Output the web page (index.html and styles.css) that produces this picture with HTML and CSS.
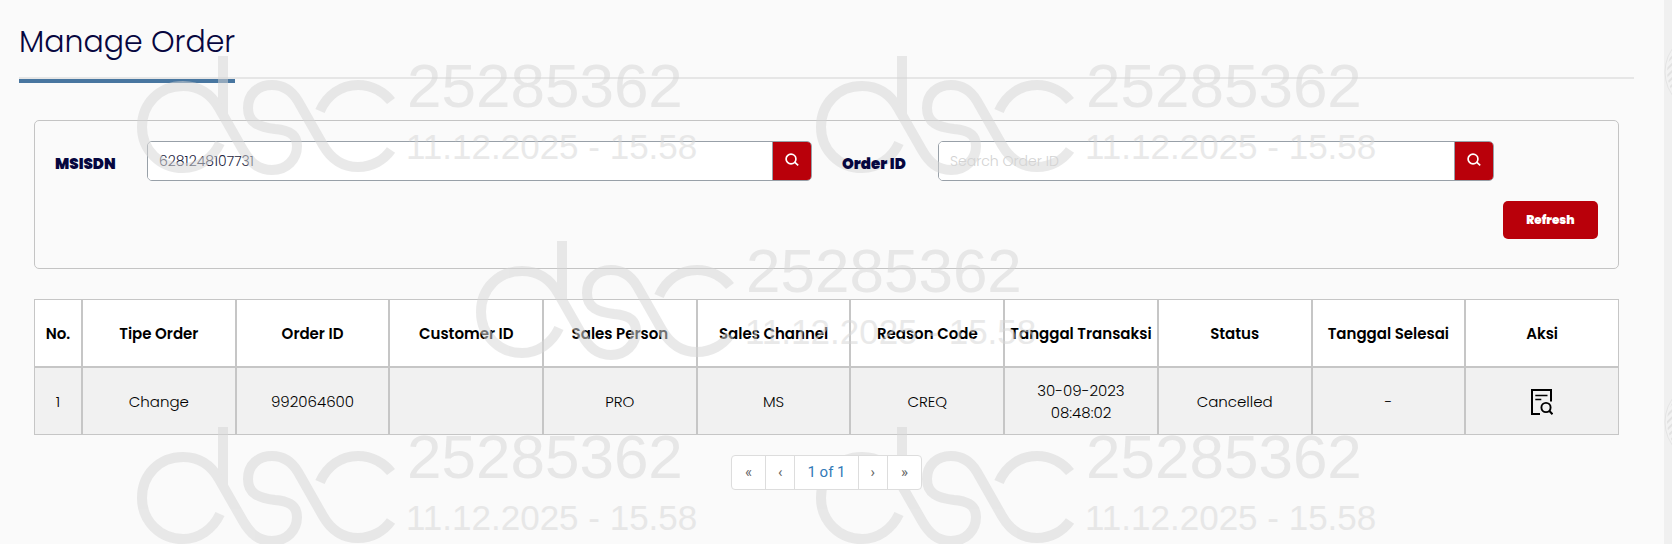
FILE: index.html
```html
<!DOCTYPE html>
<html lang="id">
<head>
<meta charset="utf-8">
<title>Manage Order</title>
<meta name="viewport" content="width=device-width, initial-scale=1">
<link rel="stylesheet" href="styles.css">
</head>
<body>
<main class="page">
  <header class="page-header">
    <h1 class="page-title">Manage Order</h1>
  </header>

  <form class="filters">
    <div class="filters-row">
      <label class="filter-label" for="msisdn">MSISDN</label>
      <div class="search">
        <input class="search-input" id="msisdn" type="text" value="6281248107731">
        <button class="search-button" type="button" aria-label="Cari MSISDN">
          <svg class="search-icon" viewBox="0 0 14 14"><circle cx="6" cy="6" r="4.9"/><path d="M9.4 8.9 13.2 12.4"/></svg>
        </button>
      </div>
      <label class="filter-label filter-label-second" for="order-id">Order ID</label>
      <div class="search">
        <input class="search-input" id="order-id" type="text" placeholder="Search Order ID">
        <button class="search-button" type="button" aria-label="Cari Order ID">
          <svg class="search-icon" viewBox="0 0 14 14"><circle cx="6" cy="6" r="4.9"/><path d="M9.4 8.9 13.2 12.4"/></svg>
        </button>
      </div>
    </div>
    <div class="filters-actions">
      <button class="refresh" type="button">Refresh</button>
    </div>
  </form>

  <table class="orders">
    <thead>
      <tr>
        <th class="col-no">No.</th>
        <th>Tipe Order</th>
        <th>Order ID</th>
        <th>Customer ID</th>
        <th>Sales Person</th>
        <th>Sales Channel</th>
        <th>Reason Code</th>
        <th>Tanggal Transaksi</th>
        <th>Status</th>
        <th>Tanggal Selesai</th>
        <th>Aksi</th>
      </tr>
    </thead>
    <tbody>
      <tr>
        <td>1</td>
        <td>Change</td>
        <td>992064600</td>
        <td></td>
        <td>PRO</td>
        <td>MS</td>
        <td>CREQ</td>
        <td>30-09-2023<br>08:48:02</td>
        <td>Cancelled</td>
        <td>-</td>
        <td>
          <button class="detail-button" type="button" aria-label="Detail">
            <svg class="detail-icon" viewBox="0 0 22 26">
              <path d="M9 25H1V1H20V12.5" stroke-width="2"/>
              <path d="M4.300 6.500H16.500M4.300 10.500H10.300" stroke-width="1.600"/>
              <circle cx="15" cy="18.500" r="4.600" stroke-width="1.900"/>
              <path d="M18.200 21.800 21.500 25.300" stroke-width="2"/>
            </svg>
          </button>
        </td>
      </tr>
    </tbody>
  </table>

  <nav class="pager" aria-label="Halaman">
    <button class="pager-item pager-end" type="button">«</button>
    <button class="pager-item" type="button">‹</button>
    <a class="pager-item pager-current" href="#">1 of 1</a>
    <button class="pager-item" type="button">›</button>
    <button class="pager-item pager-end" type="button">»</button>
  </nav>
</main>

<aside class="edge">
  <svg class="edge-art" viewBox="0 0 8 540" aria-hidden="true">
    <defs>
      <pattern id="hatch" width="5" height="5" patternUnits="userSpaceOnUse" patternTransform="rotate(45)">
        <path class="hatch-line" d="M1 0V5"/>
      </pattern>
    </defs>
    <circle class="edge-ring" cx="41" cy="72" r="40"/>
    <circle cx="41" cy="72" r="38" fill="url(#hatch)"/>
    <circle class="edge-ring" cx="41" cy="422" r="40"/>
    <circle cx="41" cy="422" r="38" fill="url(#hatch)"/>
  </svg>
</aside>

<svg class="watermark" aria-hidden="true">
  <defs>
    <g id="stamp">
      <g class="stamp-logo">
        <path d="M86 0V60"/>
        <path d="M83 87C76 102 62 112 46 112C23 112 5 94 5 71C5 48 22 30 46 30C62 30 74 38 82 52L106 94C113 106 121 114 135 114C150 114 160 103 160 90C160 78 151 74 138 73C122 71 111 67 111 52C111 38 121 29 135 29C147 29 155 35 161 45L186 89C194 103 205 111 221 111C235 111 247 104 254 94"/>
        <path d="M183 55C190 39 204 29 221 29C235 29 247 36 254 45"/>
      </g>
      <text class="stamp-id" x="270" y="51">25285362</text>
      <text class="stamp-date" x="269" y="103">11.12.2025 - 15.58</text>
    </g>
  </defs>
  <use href="#stamp" x="137" y="56"/>
  <use href="#stamp" x="816" y="56"/>
  <use href="#stamp" x="476" y="241"/>
  <use href="#stamp" x="137" y="427"/>
  <use href="#stamp" x="816" y="427"/>
</svg>
</body>
</html>
```
FILE: styles.css
```css
* {
  box-sizing: border-box;
}

body {
  position: relative;
  display: flex;
  min-height: 100vh;
  margin: 0;
  background: #fafafa;
  color: #000;
  font-family: Poppins, Inter, sans-serif;
  font-size: 15px;
  overflow-x: hidden;
}

.page {
  flex: 1;
  min-width: 0;
  padding: 19px 30px 0 19px;
}

.page-header {
  display: flex;
  border-bottom: 2px solid #e6e6e6;
}

.page-title {
  margin: 0 0 -6px;
  padding-bottom: 14px;
  border-bottom: 4px solid #4876a0;
  color: #06063f;
  font-size: 30px;
  font-weight: 300;
  line-height: 46px;
}

.filters {
  margin: 41px 15px 0;
  padding: 20px 20px 29px;
  border: 1px solid #c4c4c4;
  border-radius: 5px;
}

.filters-row {
  display: grid;
  grid-template-columns: 92px 665fr 126px 556fr;
  align-items: center;
  padding-right: 104px;
}

.filter-label {
  position: relative;
  z-index: 2;
  padding-top: 4px;
  color: #06063f;
  font-weight: 900;
}

.filter-label-second {
  padding-left: 30px;
}

.search {
  display: flex;
  height: 40px;
  border: 1px solid #98a0a8;
  border-radius: 5px;
  overflow: hidden;
}

.search-input {
  flex: 1;
  min-width: 0;
  padding: 0 11px;
  border: 0;
  background: #fff;
  color: #1b2440;
  font: inherit;
  font-size: 14px;
  font-weight: 300;
}

.search-input::placeholder {
  color: #d2d2d2;
  opacity: 1;
}

.search-button {
  display: flex;
  align-items: center;
  justify-content: center;
  width: 39px;
  padding: 0 0 2px;
  border: 0;
  border-left: 1px solid #98a0a8;
  background: #b9000a;
}

.search-icon {
  width: 14px;
  height: 14px;
  fill: none;
  stroke: #fff;
  stroke-width: 1.7;
}

.filters-actions {
  display: flex;
  justify-content: flex-end;
  padding-top: 20px;
}

.refresh {
  width: 95px;
  height: 38px;
  border: 0;
  border-radius: 5px;
  background: #b9000a;
  color: #fff;
  font: inherit;
  font-size: 12px;
  font-weight: 900;
}

.orders {
  width: calc(100% - 30px);
  margin: 30px 15px 0;
  border: 0;
  border-collapse: separate;
  border-spacing: 0;
  table-layout: fixed;
}

.orders th,
.orders td {
  height: 68px;
  padding: 2px 0 0;
  border: 1px solid #c6c6c6;
  text-align: center;
  vertical-align: middle;
  line-height: 22px;
}

.orders th {
  background: #fff;
  font-weight: 600;
}

.orders td {
  background: #f1f1f1;
  font-weight: 300;
}

.orders .col-no {
  width: 48px;
}

.detail-button {
  display: block;
  margin: 0 auto;
  padding: 0;
  border: 0;
  background: none;
}

.detail-icon {
  display: block;
  width: 22px;
  height: 26px;
  fill: none;
  stroke: #000;
}

.pager {
  position: relative;
  z-index: 2;
  display: flex;
  width: max-content;
  margin: 20px auto 0;
  border: 1px solid #ddd;
  border-radius: 4px;
  background: #fff;
}

.pager-item {
  height: 33px;
  padding: 0 12px;
  border: 0;
  background: none;
  color: #666;
  font-family: Roboto, sans-serif;
  font-size: 15px;
  line-height: 33px;
  text-decoration: none;
}

.pager-item + .pager-item {
  border-left: 1px solid #ddd;
}

.pager-end {
  padding: 0 13px;
}

.pager-current {
  color: #337ab7;
}

.edge {
  width: 8px;
  background: #f0f0f0;
}

.edge-art {
  display: block;
  width: 8px;
  height: 540px;
}

.edge-ring {
  fill: #f2f2f2;
  stroke: #e4e4e4;
}

.hatch-line {
  stroke: #e2e2e2;
  stroke-width: 2;
}

.watermark {
  position: absolute;
  inset: 0;
  z-index: 1;
  width: 100%;
  height: 100%;
  pointer-events: none;
}

#stamp {
  opacity: 0.52;
}

.stamp-logo {
  fill: none;
  stroke: #d6d6d6;
  stroke-width: 10;
}

.stamp-id,
.stamp-date {
  fill: #d6d6d6;
  font-family: "Liberation Sans", Arial, sans-serif;
}

.stamp-id {
  font-size: 62px;
}

.stamp-date {
  font-size: 35px;
}
```
